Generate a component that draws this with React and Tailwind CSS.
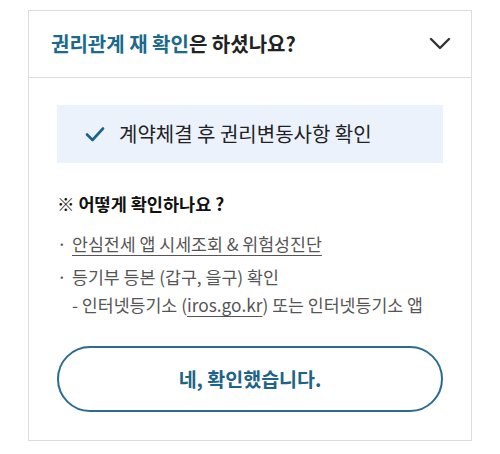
import React from "react";

const ChevronDown = () => (
    <svg width="22" height="14" viewBox="0 0 22 14" fill="none">
        <path d="M2 2l9 9 9-9" stroke="#333" strokeWidth="2.4" strokeLinecap="round" strokeLinejoin="round" />
    </svg>
)

const Check = () => (
    <svg width="20" height="16" viewBox="0 0 20 16" fill="none">
        <path d="M2 8.5l5.5 5.5L18 2.5" stroke="#1e6388" strokeWidth="2.6" strokeLinecap="round" strokeLinejoin="round" />
    </svg>
)

const App = () => {
    return (
        <div
            className="bg-white w-[500px] h-[454px] pt-[10px] pl-[28px]"
            style={{ fontFamily: '"Noto Sans CJK KR", "Noto Sans", sans-serif' }}
        >
            <div className="w-[444px] border border-[#dcdcdc] bg-white">
                {/* Header */}
                <div className="flex h-[67px] items-center justify-between border-b border-[#dcdcdc] pl-[22px] pr-[20px]">
                    <p className="text-[20px] font-bold text-[#222]">
                        <span className="text-[#1b6a8c]">권리관계 재 확인</span>은 하셨나요?
                    </p>
                    <ChevronDown />
                </div>

                {/* Body */}
                <div className="px-[28px] pt-[27px] pb-[28px]">
                    <div className="flex h-[58px] items-center gap-x-[14px] bg-[#ebf2fc] pl-[28px]">
                        <Check />
                        <p className="text-[20px] text-[#222]">계약체결 후 권리변동사항 확인</p>
                    </div>

                    <p className="mt-[27px] text-[17.5px] font-bold leading-[28px] text-[#111]">※ 어떻게 확인하나요 ?</p>

                    <ul className="mt-[12px] text-[17.3px] text-[#555]">
                        <li className="flex leading-[28px]">
                            <span className="w-[15px] shrink-0">·</span>
                            <span className="underline underline-offset-[4px]">안심전세 앱 시세조회 &amp; 위험성진단</span>
                        </li>
                        <li className="mt-[5px] flex leading-[28px]">
                            <span className="w-[15px] shrink-0">·</span>
                            <span>
                                등기부 등본 (갑구, 을구) 확인
                                <br />
                                - 인터넷등기소 (<span className="underline underline-offset-[4px]">iros.go.kr</span>) 또는 인터넷등기소 앱
                            </span>
                        </li>
                    </ul>

                    <button className="mt-[27px] flex h-[66px] w-full items-center justify-center rounded-full border-2 border-[#2c6c90] bg-white text-[19.5px] font-bold text-[#1e6388]">
                        네, 확인했습니다.
                    </button>
                </div>
            </div>
        </div>
    )
}

export default App
